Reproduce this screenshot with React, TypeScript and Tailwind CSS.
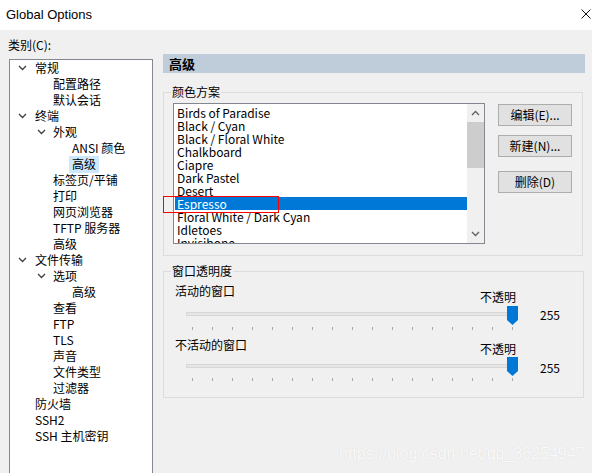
import React from 'react';

type TreeNode = { label: string; level: 0 | 1 | 2; open?: boolean; selected?: boolean };

const nodes: TreeNode[] = [
  { label: '常规', level: 0, open: true },
  { label: '配置路径', level: 1 },
  { label: '默认会话', level: 1 },
  { label: '终端', level: 0, open: true },
  { label: '外观', level: 1, open: true },
  { label: 'ANSI 颜色', level: 2 },
  { label: '高级', level: 2, selected: true },
  { label: '标签页/平铺', level: 1 },
  { label: '打印', level: 1 },
  { label: '网页浏览器', level: 1 },
  { label: 'TFTP 服务器', level: 1 },
  { label: '高级', level: 1 },
  { label: '文件传输', level: 0, open: true },
  { label: '选项', level: 1, open: true },
  { label: '高级', level: 2 },
  { label: '查看', level: 1 },
  { label: 'FTP', level: 1 },
  { label: 'TLS', level: 1 },
  { label: '声音', level: 1 },
  { label: '文件类型', level: 1 },
  { label: '过滤器', level: 1 },
  { label: '防火墙', level: 0 },
  { label: 'SSH2', level: 0 },
  { label: 'SSH 主机密钥', level: 0 },
];

const indent = ['pl-[7px]', 'pl-[25px]', 'pl-[44px]'];

const schemes = [
  'Birds of Paradise',
  'Black / Cyan',
  'Black / Floral White',
  'Chalkboard',
  'Ciapre',
  'Dark Pastel',
  'Desert',
  'Espresso',
  'Floral White / Dark Cyan',
  'Idletoes',
  'Invisibone',
];

const Chevron = ({ up = false, color = '#505050' }: { up?: boolean; color?: string }) => (
  <svg width="9" height="6" viewBox="0 0 9 6" className="block">
    <path
      d={up ? 'M1 5 L4.5 1.5 L8 5' : 'M1 1 L4.5 4.5 L8 1'}
      fill="none"
      stroke={color}
      strokeWidth="1.3"
    />
  </svg>
);

const Slider = ({ trackTop }: { trackTop: string }) => (
  <div className="relative w-[332px] h-[25px]">
    <div className={`absolute left-0 ${trackTop} w-[322px] h-[4px] bg-[#e7e7e7] border border-[#d6d6d6]`} />
    <svg width="11" height="19" viewBox="0 0 11 19" className="absolute right-0 top-0">
      <path d="M0 0 H11 V14 L5.5 19 L0 14 Z" fill="#0078d7" />
    </svg>
    <div className="absolute left-[6px] top-[21px] w-[321px] h-[3px] flex justify-between">
      {Array.from({ length: 17 }).map((_, i) => (
        <span key={i} className="w-[1px] h-[3px] bg-[#a8a8a8]" />
      ))}
    </div>
  </div>
);

const Button = ({ label, className = '' }: { label: string; className?: string }) => (
  <button className={`w-[74px] h-[22px] bg-[#e1e1e1] border border-[#adadad] text-[12px] leading-[20px] text-black ${className}`}>
    {label}
  </button>
);

export default function App() {
  return (
    <div className="relative w-[592px] h-[473px] overflow-hidden bg-[#f0f0f0] text-black font-['Noto_Sans_CJK_SC',sans-serif] text-[12px]">
      {/* title bar */}
      <div className="h-[30px] bg-white flex items-center justify-between pl-[6px] pr-[1px]">
        <span className="text-[13px] font-['Liberation_Sans','Noto_Sans_CJK_SC',sans-serif]">Global Options</span>
        <svg width="10" height="10" viewBox="0 0 10 10" className="-mt-[2px]">
          <path d="M0.5 0.5 L9.5 9.5 M9.5 0.5 L0.5 9.5" stroke="#111" strokeWidth="1" />
        </svg>
      </div>

      <div className="flex">
        {/* category tree */}
        <div className="w-[163px] pl-[9px] pt-[7px]">
          <div className="-ml-[1px] leading-[16px]">类别(C):</div>
          <div className="mt-[6px] w-[144px] h-[430px] bg-white border border-[#828790]">
            {nodes.map((n, i) => (
              <div key={i} className={`flex items-center h-[16px] ${indent[n.level]}`}>
                <div className={`w-[18px] flex ${n.level === 0 ? 'pl-[1px]' : 'pl-[2px]'}`}>
                  {n.open && <Chevron color="#404040" />}
                </div>
                <span
                  className={`leading-[16px] whitespace-nowrap ${n.selected ? '-ml-[3px] px-[3px] h-[17px] bg-[#cce8ff]' : ''}`}
                >
                  {n.label}
                </span>
              </div>
            ))}
          </div>
        </div>

        {/* right side */}
        <div className="w-[422px] pt-[24px]">
          <div className="h-[19px] bg-[#bfcddb] pl-[6px] font-bold text-[13px] leading-[19px]">高级</div>

          <fieldset className="mt-[11px] w-[420px] border border-[#dcdcdc]">
            <legend className="ml-[7px] px-[1px] leading-[16px]">颜色方案</legend>
            <div className="flex pl-[9px] pt-[3px] pb-[11px]">
              <div className="w-[312px] h-[141px] bg-white border border-[#828790] flex">
                <div className="flex-1 overflow-hidden pt-[2px] pl-[1px]">
                  {schemes.map((s) => (
                    <div
                      key={s}
                      className={`h-[13px] leading-[13px] pl-[2px] whitespace-nowrap ${s === 'Espresso' ? 'bg-[#0078d7] text-white' : ''}`}
                    >
                      {s}
                    </div>
                  ))}
                </div>
                <div className="w-[17px] bg-[#f0f0f0] flex flex-col">
                  <div className="h-[18px] flex items-center justify-center">
                    <Chevron up color="#606060" />
                  </div>
                  <div className="h-[46px] bg-[#cdcdcd]" />
                  <div className="flex-1" />
                  <div className="h-[18px] flex items-center justify-center">
                    <Chevron color="#606060" />
                  </div>
                </div>
              </div>
              <div className="ml-[13px] pt-[1px] flex flex-col">
                <Button label="编辑(E)..." />
                <Button label="新建(N)..." className="mt-[9px]" />
                <Button label="删除(D)" className="mt-[14px]" />
              </div>
            </div>
          </fieldset>

          <fieldset className="mt-[7px] w-[421px] border border-[#dcdcdc]">
            <legend className="ml-[7px] px-[1px] leading-[16px]">窗口透明度</legend>
            <div className="pl-[11px] pt-[4px] pb-[15px]">
              <div className="flex">
                <span className="w-[305px] leading-[16px]">活动的窗口</span>
                <span className="mt-[6px] leading-[16px]">不透明</span>
              </div>
              <div className="flex items-start mt-[1px]">
                <div className="ml-[11px]">
                  <Slider trackTop="top-[6px]" />
                </div>
                <span className="ml-[22px] mt-[1px] leading-[16px]">255</span>
              </div>

              <div className="flex mt-[6px]">
                <span className="w-[305px] leading-[16px]">不活动的窗口</span>
                <span className="mt-[4px] leading-[16px]">不透明</span>
              </div>
              <div className="flex items-start">
                <div className="ml-[11px]">
                  <Slider trackTop="top-[7px]" />
                </div>
                <span className="ml-[22px] mt-[3px] leading-[16px]">255</span>
              </div>
            </div>
          </fieldset>
        </div>
      </div>

      {/* annotation highlight */}
      <div className="absolute left-[163px] top-[196px] w-[116px] h-[17px] border border-[#ff0000]" />

      {/* watermark */}
      <div className="absolute left-[339px] top-[444px] text-[16px] leading-[20px] text-[#fafafa] font-['Liberation_Sans',sans-serif] [text-shadow:0_0_1px_rgba(0,0,0,0.12)]">
        https://blog.csdn.net/qq_36254947
      </div>
    </div>
  );
}
